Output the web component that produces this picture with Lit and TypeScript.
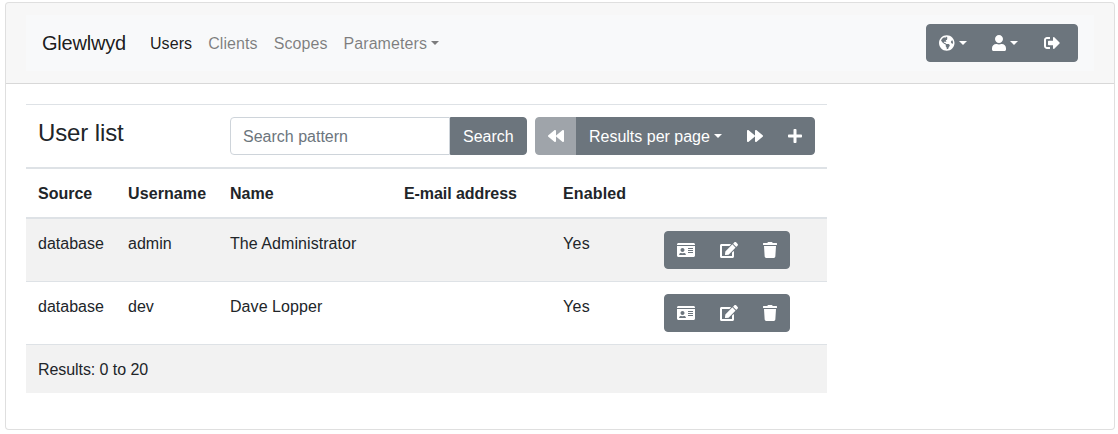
import { LitElement, html, css, svg } from "lit";
import { customElement } from "lit/decorators.js";

const ic = (w: number, d: string) =>
  html`<svg class="ic" viewBox="0 0 ${w} 512" style="width:${(w / 512) * 16}px" aria-hidden="true">${svg`<path fill="currentColor" d=${d}></path>`}</svg>`;

const GLOBE = "M248 8C111.03 8 0 119.03 0 256s111.03 248 248 248 248-111.03 248-248S384.97 8 248 8zm82.29 357.6c-3.9 3.88-7.99 7.95-11.31 11.28-2.99 3-5.1 6.7-6.17 10.71-1.51 5.66-2.73 11.38-4.77 16.87l-17.39 46.85c-13.76 3-28 4.69-42.65 4.69v-27.38c1.69-12.62-7.64-36.26-22.63-51.25-6-6-9.37-14.14-9.37-22.63v-32.01c0-11.64-6.27-22.34-16.46-27.97-14.37-7.95-34.81-19.06-48.81-26.11-11.48-5.78-22.1-13.14-31.65-21.75l-.8-.72a114.792 114.792 0 0 1-18.06-20.74c-9.38-13.77-24.66-36.42-34.59-51.14 20.47-45.5 57.36-82.04 103.2-101.89l24.01 12.01C203.48 89.74 216 82.01 216 70.11v-11.3c7.99-1.29 16.12-2.11 24.39-2.42l28.3 28.3c6.25 6.25 6.25 16.38 0 22.63L264 112l-10.34 10.34c-3.12 3.12-3.12 8.19 0 11.31l4.69 4.69c3.12 3.12 3.12 8.19 0 11.31l-8 8a8.008 8.008 0 0 1-5.66 2.34h-8.99c-2.08 0-4.08.81-5.58 2.27l-9.92 9.65a8.008 8.008 0 0 0-1.58 9.31l15.59 31.19c2.66 5.32-1.21 11.58-7.15 11.58h-5.64c-1.93 0-3.79-.7-5.24-1.96l-9.28-8.06a16.017 16.017 0 0 0-15.55-3.1l-31.17 10.39a11.95 11.95 0 0 0-8.17 11.34c0 4.53 2.56 8.66 6.61 10.69l11.08 5.54c9.41 4.71 19.79 7.16 30.31 7.16s22.59 27.29 32 32h66.75c8.49 0 16.62 3.37 22.63 9.37l13.69 13.69a30.503 30.503 0 0 1 8.93 21.57 46.536 46.536 0 0 1-13.72 32.98zM417 274.25c-5.79-1.45-10.84-5-14.15-9.97l-17.98-26.97a23.97 23.97 0 0 1 0-26.62l19.59-29.38c2.32-3.47 5.5-6.29 9.24-8.15l12.98-6.49C440.2 193.59 448 223.87 448 256c0 8.67-.74 17.16-1.82 25.54L417 274.25z";
const USER = "M224 256c70.7 0 128-57.3 128-128S294.7 0 224 0 96 57.3 96 128s57.3 128 128 128zm89.6 32h-16.7c-22.2 10.2-46.9 16-72.9 16s-50.6-5.8-72.9-16h-16.7C60.2 288 0 348.2 0 422.4V464c0 26.5 21.5 48 48 48h352c26.5 0 48-21.5 48-48v-41.6c0-74.2-60.2-134.4-134.4-134.4z";
const SIGNOUT = "M497 273L329 441c-15 15-41 4.5-41-17v-96H152c-13.3 0-24-10.7-24-24v-96c0-13.3 10.7-24 24-24h136V88c0-21.4 25.9-32 41-17l168 168c9.3 9.4 9.3 24.6 0 34zM192 436v-40c0-6.6-5.4-12-12-12H96c-17.7 0-32-14.3-32-32V160c0-17.7 14.3-32 32-32h84c6.6 0 12-5.4 12-12V76c0-6.6-5.4-12-12-12H96c-53 0-96 43-96 96v192c0 53 43 96 96 96h84c6.6 0 12-5.4 12-12z";
const BACK = "M11.5 280.6l192 160c20.6 17.2 52.5 2.8 52.5-24.6V96c0-27.4-31.9-41.8-52.5-24.6l-192 160c-15.3 12.8-15.3 36.4 0 49.2zm256 0l192 160c20.6 17.2 52.5 2.8 52.5-24.6V96c0-27.4-31.9-41.8-52.5-24.6l-192 160c-15.3 12.8-15.3 36.4 0 49.2z";
const FWD = "M500.5 231.4l-192-160C287.9 54.3 256 68.6 256 96v320c0 27.4 31.9 41.8 52.5 24.6l192-160c15.3-12.8 15.3-36.4 0-49.2zm-256 0l-192-160C31.9 54.3 0 68.6 0 96v320c0 27.4 31.9 41.8 52.5 24.6l192-160c15.3-12.8 15.3-36.4 0-49.2z";
const PLUS = "M416 208H272V64c0-17.67-14.33-32-32-32h-32c-17.67 0-32 14.33-32 32v144H32c-17.67 0-32 14.33-32 32v32c0 17.67 14.33 32 32 32h144v144c0 17.67 14.33 32 32 32h32c17.67 0 32-14.33 32-32V304h144c17.67 0 32-14.33 32-32v-32c0-17.67-14.33-32-32-32z";
const IDCARD = "M528 32H48C21.5 32 0 53.5 0 80v16h576V80c0-26.5-21.5-48-48-48zM0 432c0 26.5 21.5 48 48 48h480c26.5 0 48-21.5 48-48V128H0v304zm352-232c0-4.4 3.6-8 8-8h144c4.4 0 8 3.6 8 8v16c0 4.4-3.6 8-8 8H360c-4.4 0-8-3.6-8-8v-16zm0 64c0-4.4 3.6-8 8-8h144c4.4 0 8 3.6 8 8v16c0 4.4-3.6 8-8 8H360c-4.4 0-8-3.6-8-8v-16zm0 64c0-4.4 3.6-8 8-8h144c4.4 0 8 3.6 8 8v16c0 4.4-3.6 8-8 8H360c-4.4 0-8-3.6-8-8v-16zM176 192c35.3 0 64 28.7 64 64s-28.7 64-64 64-64-28.7-64-64 28.7-64 64-64zM67.1 396.2C75.5 370.5 99.6 352 128 352h8.2c12.3 5.1 25.7 8 39.8 8s27.6-2.9 39.8-8h8.2c28.4 0 52.5 18.5 60.9 44.2 3.2 9.9-5.2 19.8-15.6 19.8H82.7c-10.4 0-18.8-10-15.6-19.8z";
const EDIT = "M402.6 83.2l90.2 90.2c3.8 3.8 3.8 10 0 13.8L274.4 405.6l-92.8 10.3c-12.4 1.4-22.9-9.1-21.5-21.5l10.3-92.8L388.8 83.2c3.8-3.8 10-3.8 13.8 0zm162-22.9l-48.8-48.8c-15.2-15.2-39.9-15.2-55.2 0l-35.4 35.4c-3.8 3.8-3.8 10 0 13.8l90.2 90.2c3.8 3.8 10 3.8 13.8 0l35.4-35.4c15.2-15.3 15.2-40 0-55.2zM384 346.2V448H64V128h229.8c3.2 0 6.2-1.3 8.5-3.5l40-40c7.6-7.6 2.2-20.5-8.5-20.5H48C21.5 64 0 85.5 0 112v352c0 26.5 21.5 48 48 48h352c26.5 0 48-21.5 48-48V306.2c0-10.7-12.9-16-20.5-8.5l-40 40c-2.2 2.3-3.5 5.3-3.5 8.5z";
const TRASH = "M432 32H312l-9.4-18.7A24 24 0 0 0 281.1 0H166.8a23.72 23.72 0 0 0-21.4 13.3L136 32H16A16 16 0 0 0 0 48v32a16 16 0 0 0 16 16h416a16 16 0 0 0 16-16V48a16 16 0 0 0-16-16zM53.2 467a48 48 0 0 0 47.9 45h245.8a48 48 0 0 0 47.9-45L416 128H32z";

const USERS = [
  { source: "database", username: "admin", name: "The Administrator", email: "", enabled: "Yes" },
  { source: "database", username: "dev", name: "Dave Lopper", email: "", enabled: "Yes" },
];

@customElement("app-root")
export class AppRoot extends LitElement {
  static styles = css`
    :host {
      display: block;
      padding: 2px 3px 4px 5px;
      font: 16px/24px "Liberation Sans", Arial, sans-serif;
      color: #212529;
    }
    * { box-sizing: border-box; }
    .card {
      border: 1px solid rgba(0, 0, 0, 0.125);
      border-radius: 4px;
      background: #fff;
    }
    .head {
      padding: 12px 20px;
      background: rgba(0, 0, 0, 0.03);
      border-bottom: 1px solid rgba(0, 0, 0, 0.125);
      border-radius: 3px 3px 0 0;
    }
    .navbar {
      display: flex;
      align-items: center;
      justify-content: space-between;
      padding: 8px 16px;
      background: #f8f9fa;
    }
    .left { display: flex; align-items: center; }
    .brand {
      font-size: 20px;
      line-height: 30px;
      padding: 5px 0;
      margin-right: 16px;
      letter-spacing: -0.2px;
      color: rgba(0, 0, 0, 0.9);
    }
    .nav {
      display: block;
      padding: 9px 8px 7px;
      letter-spacing: 0.08px;
      color: rgba(0, 0, 0, 0.5);
      white-space: nowrap;
    }
    .nav.active { color: rgba(0, 0, 0, 0.9); }
    .caret {
      display: inline-block;
      width: 0;
      height: 0;
      margin-left: 4.08px;
      vertical-align: 4.08px;
      border-top: 4.8px solid currentColor;
      border-left: 4.8px solid transparent;
      border-right: 4.8px solid transparent;
    }
    .body { padding: 20px; }
    table {
      width: 100%;
      max-width: 801px;
      table-layout: fixed;
      border-collapse: collapse;
      margin-bottom: 16px;
    }
    .c1 { width: 90px; }
    .c2 { width: 102px; }
    .c3 { width: 174px; }
    .c4 { width: 159px; }
    .c5 { width: 101px; }
    th, td {
      padding: 13px 12px 11px;
      text-align: left;
      vertical-align: top;
      border-top: 1px solid #dee2e6;
    }
    th { font-weight: 700; }
    thead tr.cols th {
      border-top: 2px solid #dee2e6;
      border-bottom: 2px solid #dee2e6;
    }
    tbody td { border-top: none; border-bottom: 1px solid #dee2e6; }
    tbody tr:nth-child(odd) td { background: #f2f2f2; }
    tbody tr:last-child td { border-bottom: none; }
    th.title-cell { padding-top: 14px; font-weight: 400; }
    th.tools-cell, td.act { padding: 12px; }
    h4 {
      margin: 0;
      font-size: 24px;
      font-weight: 500;
      line-height: 28.8px;
      letter-spacing: -0.12px;
    }
    .ls-username { letter-spacing: 0.1px; }
    .ls-email { letter-spacing: -0.07px; }
    .ls-enabled { letter-spacing: 0.14px; }
    .ls-name { letter-spacing: 0.06px; }
    .ls-yes { letter-spacing: 0.3px; }
    .ls-results { letter-spacing: -0.07px; }
    .tools { display: flex; font-weight: 400; }
    .search { display: flex; width: 297px; margin-right: 8px; }
    input {
      width: 220px;
      height: 38px;
      padding: 7px 12px 5px;
      font: inherit;
      color: #495057;
      background: #fff;
      border: 1px solid #ced4da;
      border-radius: 4px 0 0 4px;
      outline: none;
    }
    input::placeholder { color: #6c757d; opacity: 1; }
    .group { display: inline-flex; }
    .btn {
      display: inline-flex;
      align-items: center;
      height: 38px;
      padding: 6px 12px;
      font: inherit;
      color: #fff;
      background: #6c757d;
      border: 1px solid #6c757d;
      border-radius: 0;
      white-space: nowrap;
    }
    .label { padding-top: 2px; }
    .group .btn + .btn { margin-left: -1px; }
    .group .btn:first-child { border-radius: 4px 0 0 4px; }
    .group .btn:last-child { border-radius: 0 4px 4px 0; }
    .search .btn { border-radius: 0 4px 4px 0; }
    .btn.disabled { opacity: 0.65; }
    .btn.logout { padding: 6px 17px 6px 13px; }
    .btn .caret { margin-left: 4.08px; vertical-align: middle; }
    .ic { display: block; height: 16px; flex: none; }
  `;

  render() {
    return html`
      <div class="card">
        <div class="head">
          <nav class="navbar">
            <div class="left">
              <span class="brand">Glewlwyd</span>
              <span class="nav active">Users</span>
              <span class="nav">Clients</span>
              <span class="nav">Scopes</span>
              <span class="nav">Parameters<span class="caret"></span></span>
            </div>
            <div class="group">
              <button class="btn">${ic(496, GLOBE)}<span class="caret"></span></button>
              <button class="btn">${ic(448, USER)}<span class="caret"></span></button>
              <button class="btn logout">${ic(512, SIGNOUT)}</button>
            </div>
          </nav>
        </div>
        <div class="body">
          <table>
            <colgroup>
              <col class="c1" /><col class="c2" /><col class="c3" /><col class="c4" /><col class="c5" /><col />
            </colgroup>
            <thead>
              <tr>
                <th colspan="2" class="title-cell"><h4>User list</h4></th>
                <th colspan="4" class="tools-cell">
                  <div class="tools">
                    <div class="search">
                      <input type="text" placeholder="Search pattern" />
                      <button class="btn"><span class="label">Search</span></button>
                    </div>
                    <div class="group">
                      <button class="btn disabled">${ic(512, BACK)}</button>
                      <button class="btn"><span class="label">Results per page</span><span class="caret"></span></button>
                      <button class="btn">${ic(512, FWD)}</button>
                      <button class="btn">${ic(448, PLUS)}</button>
                    </div>
                  </div>
                </th>
              </tr>
              <tr class="cols">
                <th>Source</th>
                <th class="ls-username">Username</th>
                <th>Name</th>
                <th class="ls-email">E-mail address</th>
                <th class="ls-enabled">Enabled</th>
                <th></th>
              </tr>
            </thead>
            <tbody>
              ${USERS.map(
                (u) => html`<tr>
                  <td>${u.source}</td>
                  <td>${u.username}</td>
                  <td class="ls-name">${u.name}</td>
                  <td>${u.email}</td>
                  <td class="ls-yes">${u.enabled}</td>
                  <td class="act">
                    <div class="group">
                      <button class="btn">${ic(576, IDCARD)}</button>
                      <button class="btn">${ic(576, EDIT)}</button>
                      <button class="btn">${ic(448, TRASH)}</button>
                    </div>
                  </td>
                </tr>`
              )}
              <tr><td colspan="6" class="ls-results">Results: 0 to 20</td></tr>
            </tbody>
          </table>
        </div>
      </div>
    `;
  }
}
